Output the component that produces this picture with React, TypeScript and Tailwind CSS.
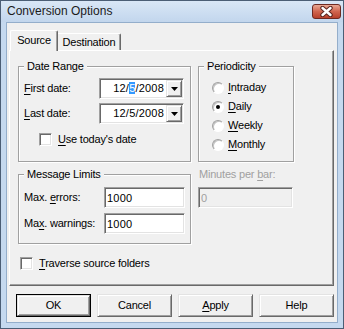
import React from "react";

const font = "font-['Liberation_Sans',Arial,sans-serif]";
const sunken =
  "border border-t-[#a0a0a0] border-l-[#a0a0a0] border-b-white border-r-white shadow-[inset_1px_1px_0_#696969,inset_-1px_-1px_0_#e3e3e3]";
const raised =
  "border border-t-[#e3e3e3] border-l-[#e3e3e3] border-b-[#696969] border-r-[#696969] shadow-[inset_1px_1px_0_#fff,inset_-1px_-1px_0_#a0a0a0]";

function U({ children }: any) {
  return <span className="underline underline-offset-[2px] decoration-[1px]">{children}</span>;
}

function GroupBox({ title, className, children }: any) {
  return (
    <div className={`relative pt-[6px] ${className}`}>
      <div className="h-full border border-[#a0a0a0] shadow-[inset_1px_1px_0_#fff,1px_1px_0_#fff]">
        {children}
      </div>
      <span className="absolute left-[6px] top-0 px-[3px] bg-[#f0f0f0] leading-[13px]">{title}</span>
    </div>
  );
}

function DateField({ selected }: { selected?: boolean }) {
  return (
    <div className={`w-[85px] h-[21px] bg-white ${sunken} flex items-center justify-end py-[1px] pr-[1px]`}>
      <span className="pr-[2px] tracking-[0.2px]">
        12/{selected ? <span className="bg-[#3399ff] text-white">5</span> : "5"}/2008
      </span>
      <div className={`w-[16px] h-full bg-[#f0f0f0] ${raised} flex items-center justify-center`}>
        <svg width="7" height="4" viewBox="0 0 7 4">
          <polygon points="0,0 7,0 3.5,4" fill="#000" />
        </svg>
      </div>
    </div>
  );
}

function Edit({ value, disabled, className }: any) {
  return (
    <input
      readOnly
      defaultValue={value}
      className={`h-[21px] ${sunken} pl-[2px] outline-none tracking-[0.2px] ${
        disabled ? "bg-[#f0f0f0] text-[#a0a0a0]" : "bg-white text-black"
      } ${className}`}
    />
  );
}

function CheckBox({ label }: any) {
  return (
    <div className="flex items-center gap-[6px]">
      <div className={`w-[13px] h-[13px] bg-white ${sunken}`} />
      <span>{label}</span>
    </div>
  );
}

function Radio({ label, checked }: any) {
  return (
    <div className="h-[19px] flex items-center gap-[4px]">
      <div className="w-[12px] h-[12px] rounded-full bg-white border border-t-[#a0a0a0] border-l-[#a0a0a0] border-b-white border-r-white shadow-[inset_1px_1px_0_#c4c4c4] flex items-center justify-center">
        {checked && <div className="w-[4px] h-[4px] rounded-full bg-black" />}
      </div>
      <span>{label}</span>
    </div>
  );
}

function Button({ children, isDefault }: any) {
  return (
    <div className={`w-[75px] h-[23px] ${isDefault ? "border border-[#000]" : ""}`}>
      <div className={`h-full bg-[#f0f0f0] ${raised} flex items-center justify-center`}>{children}</div>
    </div>
  );
}

export default function App() {
  return (
    <div
      className={`w-[344px] h-[329px] border border-[#4b5e75] bg-[#c5d9ef] flex flex-col text-[11px] leading-[13px] text-black tracking-[-0.2px] ${font}`}
    >
      <div className="h-[21px] flex items-center pl-[6px] pr-[2px] bg-gradient-to-b from-[#d9e7f6] to-[#c2d6ed]">
        <span className="flex-1 text-[12px] leading-[15px] tracking-normal text-[#1b1b1b]">Conversion Options</span>
        <div className="w-[29px] h-[15px] rounded-[3px] border border-[#6e2a22] bg-gradient-to-b from-[#e8a894] via-[#d0654f] to-[#b8402b] flex items-center justify-center">
          <svg width="15" height="11" viewBox="0 0 15 11">
            <path d="M3.5 2 L11.5 9 M11.5 2 L3.5 9" stroke="#5a2620" strokeWidth="4.4" strokeLinecap="round" />
            <path d="M3.5 2 L11.5 9 M11.5 2 L3.5 9" stroke="#fff" strokeWidth="2.4" strokeLinecap="round" />
          </svg>
        </div>
      </div>

      <div className="flex-1 mx-[5px] mb-[5px] border border-[#94aecb] bg-[#f0f0f0] pt-[7px] px-[2px]">
        <div className="flex items-start h-[21px] -mb-[1px] ml-[1px] relative z-10">
          <div className="w-[48px] h-[21px] bg-[#f0f0f0] border-l border-t border-r border-l-white border-t-white border-r-[#696969] rounded-t-[2px] shadow-[inset_-1px_0_0_#a0a0a0] flex justify-center pt-[3px]">
            Source
          </div>
          <div className="w-[63px] h-[17px] mt-[3px] border-t border-r border-t-white border-r-[#696969] rounded-tr-[2px] shadow-[inset_-1px_0_0_#a0a0a0] flex justify-center pt-[2px]">
            Destination
          </div>
        </div>

        <div className="w-[325px] h-[236px] border border-l-white border-t-white border-r-[#696969] border-b-[#696969] shadow-[inset_-1px_-1px_0_#a0a0a0] pl-[8px] pt-[9px]">
          <div className="flex gap-[7px]">
            <GroupBox title="Date Range" className="w-[173px] h-[102px]">
              <div className="pl-[5px] pt-[11px]">
                <div className="flex items-center">
                  <span className="w-[75px]">
                    <U>F</U>irst date:
                  </span>
                  <DateField selected />
                </div>
                <div className="flex items-center mt-[4px]">
                  <span className="w-[75px]">
                    <U>L</U>ast date:
                  </span>
                  <DateField />
                </div>
                <div className="ml-[15px] mt-[9px]">
                  <CheckBox
                    label={
                      <>
                        <U>U</U>se today's date
                      </>
                    }
                  />
                </div>
              </div>
            </GroupBox>
            <GroupBox title="Periodicity" className="w-[96px] h-[102px]">
              <div className="pl-[13px] pt-[11px]">
                <Radio label={<><U>I</U>ntraday</>} />
                <Radio label={<><U>D</U>aily</>} checked />
                <Radio label={<><U>W</U>eekly</>} />
                <Radio label={<><U>M</U>onthly</>} />
              </div>
            </GroupBox>
          </div>

          <div className="flex gap-[7px] mt-[6px]">
            <GroupBox title="Message Limits" className="w-[173px] h-[76px]">
              <div className="pl-[5px] pt-[12px]">
                <div className="flex items-center">
                  <span className="w-[80px]">
                    Max. <U>e</U>rrors:
                  </span>
                  <Edit value="1000" className="w-[81px]" />
                </div>
                <div className="flex items-center mt-[5px]">
                  <span className="w-[80px]">
                    Ma<U>x</U>. warnings:
                  </span>
                  <Edit value="1000" className="w-[81px]" />
                </div>
              </div>
            </GroupBox>
            <div className="flex flex-col">
              <span className="leading-[13px] text-[#a0a0a0] pl-[1px]">
                Minutes per <U>b</U>ar:
              </span>
              <Edit value="0" disabled className="w-[95px] mt-[6px]" />
            </div>
          </div>

          <div className="mt-[13px] ml-[2px]">
            <CheckBox
              label={
                <>
                  <U>T</U>raverse source folders
                </>
              }
            />
          </div>
        </div>

        <div className="flex gap-[6px] mt-[8px] ml-[7px]">
          <Button isDefault>OK</Button>
          <Button>Cancel</Button>
          <Button>
            <span>
              <U>A</U>pply
            </span>
          </Button>
          <Button>Help</Button>
        </div>
      </div>
    </div>
  );
}
